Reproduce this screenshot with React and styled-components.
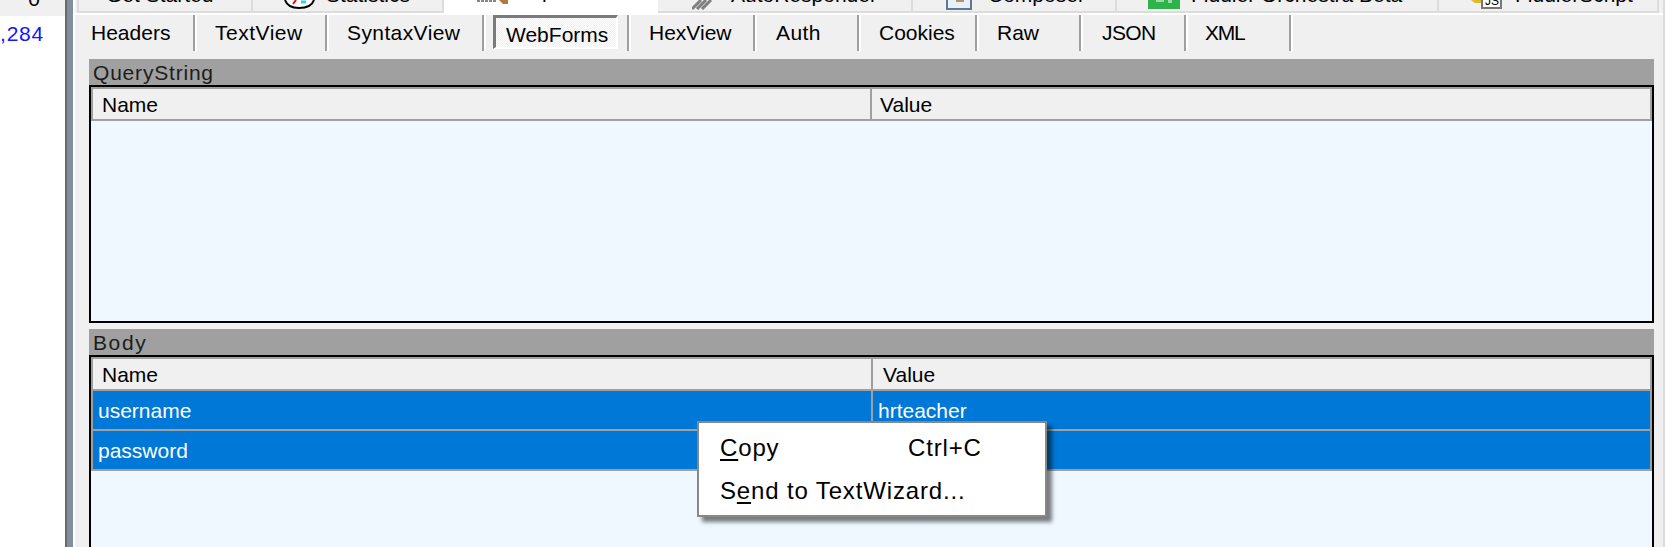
import React from 'react'
import styled, { createGlobalStyle } from 'styled-components'

const GlobalStyle = createGlobalStyle`
    html, body {
        margin: 0;
        height: 547px;
        overflow: hidden;
        background: #fff;
        font-family: "Liberation Sans", Arial, sans-serif;
        color: #000;
    }
    * { box-sizing: border-box; }
`

const Page = styled.div`
    display: flex;
    height: 547px;
    width: 1669px;
    overflow: hidden;
`
const SessionList = styled.div`
    width: 65px;
    flex: none;
    display: flex;
    flex-direction: column;
    font-size: 21px;
    line-height: 24px;
`
const ListHead = styled.div`
    height: 16px;
    background: #f0f0f0;
    display: flex;
    align-items: flex-end;
    justify-content: flex-end;
    padding: 0 25px 5px 0;
    overflow: hidden;
`
const ListCell = styled.div`
    color: #1414ff;
    text-align: right;
    padding-right: 22px;
    margin-top: 6px;
    letter-spacing: 0.8px;
    white-space: nowrap;
`
const Splitter = styled.div`
    width: 10px;
    flex: none;
    background: #7f8f9f;
    border-left: 2px solid #6a6a6a;
    border-right: 2px solid #fff;
`
const Panel = styled.div`
    width: 1588px;
    flex: none;
    background: #f0f0f0;
    display: flex;
    flex-direction: column;
`
const RightEdge = styled.div`
    width: 2px;
    flex: none;
    background: #dcdcdc;
`
const TopTabs = styled.div`
    height: 13px;
    flex: none;
    display: flex;
    padding-left: 2px;
    overflow: hidden;
    font-size: 21px;
    line-height: 24px;
`
const TopTab = styled.div`
    position: relative;
    width: ${p => p.$width}px;
    flex: none;
    display: flex;
    align-items: flex-end;
    padding-left: ${p => p.$pad}px;
    padding-bottom: ${p => (p.$active ? 10 : 4)}px;
    white-space: nowrap;
    background: ${p => (p.$active ? '#fff' : '#f0f0f0')};
    border-bottom: ${p => (p.$active ? '0' : '2px solid #dcdcdc')};
    border-right: ${p => (p.$active ? '0' : '2px solid #dcdcdc')};
    border-left: ${p => (p.$first ? '2px solid #dcdcdc' : '0')};
`
const TabGlyph = styled.svg`
    position: absolute;
    top: 0;
    left: ${p => p.$left}px;
`
const SubTabs = styled.div`
    height: 38px;
    flex: none;
    display: flex;
    padding-left: 6px;
    border-top: 2px solid #fff;
    font-size: 21px;
`
const SubTab = styled.div`
    width: ${p => p.$width - 2}px;
    flex: none;
    margin-right: 2px;
    display: flex;
    align-items: center;
    padding-left: ${p => p.$pad}px;
    letter-spacing: ${p => p.$spacing || 0}px;
    border-right: 2px solid #a0a0a0;
    box-shadow: 2px 0 0 #fff;
    background: #f0f0f0;
`
const PressedTab = styled.div`
    align-self: flex-start;
    width: 125px;
    height: 34px;
    margin-left: 7px;
    padding: 5px 0 0 10px;
    line-height: 24px;
    border-top: 3px solid #7a7a7a;
    border-left: 3px solid #7a7a7a;
    border-right: 2px solid #fff;
    border-bottom: 2px solid #fff;
    background-color: #fff;
    background-image: conic-gradient(#f0f0f0 25%, #fff 0 50%, #f0f0f0 0 75%, #fff 0);
    background-size: 2px 2px;
`
const Sections = styled.div`
    flex: 1;
    min-height: 0;
    display: flex;
    flex-direction: column;
    position: relative;
    overflow: hidden;
    padding: 8px 9px 0 14px;
`
const SectionTitle = styled.div`
    height: 26px;
    flex: none;
    background: #a0a0a0;
    color: #1c1c1c;
    padding: 1px 0 0 4px;
    font-size: 21px;
    line-height: 26px;
    letter-spacing: ${p => p.$spacing}px;
`
const ListBox = styled.div`
    flex: none;
    height: ${p => p.$height}px;
    margin-bottom: 6px;
    background: #eff7ff;
    border: 2px solid #000;
`
const Grid = styled.div`
    border: 2px solid #a0a0a0;
    border-bottom: 0;
    font-size: 21px;
`
const HeadRow = styled.div`
    height: 32px;
    display: flex;
    background: #f0f0f0;
    border-bottom: 2px solid #a0a0a0;
`
const DataRow = styled.div`
    height: 40px;
    display: flex;
    background: #0078d7;
    color: #fff;
    border-bottom: 2px solid #a0a0a0;
`
const NameCell = styled.div`
    width: ${p => p.$width}px;
    flex: none;
    display: flex;
    align-items: center;
    padding: 2px 0 0 ${p => p.$pad}px;
    border-right: 2px solid #a0a0a0;
`
const ValueCell = styled.div`
    flex: 1;
    display: flex;
    align-items: center;
    padding: 2px 0 0 ${p => p.$pad}px;
`
const ContextMenu = styled.div`
    position: absolute;
    left: 622px;
    top: 370px;
    width: 350px;
    height: 96px;
    padding: 3px 0;
    background: #fff;
    border: 2px solid #888;
    box-shadow: 5px 5px 4px rgba(0, 0, 0, 0.5);
    font-size: 24px;
    letter-spacing: 0.85px;
`
const MenuItem = styled.div`
    height: 43px;
    display: flex;
    align-items: center;
    padding-left: 21px;
    white-space: nowrap;
`
const MenuLabel = styled.span`
    width: 188px;
    flex: none;
    u { text-underline-offset: 3px; }
`

const subTabs = [
    { label: 'Headers', width: 116, pad: 10 },
    { label: 'TextView', width: 132, pad: 18, spacing: 0.5 },
    { label: 'SyntaxView', width: 157, pad: 18, spacing: 0.4 },
    { label: 'WebForms', width: 145, pressed: true },
    { label: 'HexView', width: 126, pad: 18 },
    { label: 'Auth', width: 104, pad: 19, spacing: 0.4 },
    { label: 'Cookies', width: 118, pad: 18 },
    { label: 'Raw', width: 104, pad: 18 },
    { label: 'JSON', width: 105, pad: 19, spacing: -0.6 },
    { label: 'XML', width: 105, pad: 17, spacing: -1.2 },
]

const GaugeIcon = () => (
    <TabGlyph $left={31} width="31" height="10" viewBox="0 0 31 10">
        <path d="M1 0 C3 6 9 8 15 8 C21 8 28 6 30 0" fill="#fff" stroke="#000" strokeWidth="2" />
        <path d="M12 0 L9 4" stroke="#d11" strokeWidth="2" />
        <path d="M17 2 h5" stroke="#2dd" strokeWidth="3" />
    </TabGlyph>
)
const InspectIcon = () => (
    <TabGlyph $left={33} width="32" height="6" viewBox="0 0 32 6">
        <path d="M0 1 h20" stroke="#888" strokeWidth="2" strokeDasharray="3 1" />
        <path d="M22 0 L26 4 L31 4 L31 0 Z" fill="#b8773a" />
    </TabGlyph>
)
const ResponderIcon = () => (
    <TabGlyph $left={34} width="20" height="10" viewBox="0 0 20 10">
        <path d="M0 9 L9 0 M5 9 L14 0 M10 9 L19 0" stroke="#808080" strokeWidth="3" />
    </TabGlyph>
)
const ComposerIcon = () => (
    <TabGlyph $left={33} width="26" height="10" viewBox="0 0 26 10">
        <rect x="1" y="-4" width="24" height="13" fill="#eaf0f8" stroke="#5b7a99" strokeWidth="2" />
        <path d="M10 1 h8" stroke="#b09468" strokeWidth="2" />
    </TabGlyph>
)
const OrchestraIcon = () => (
    <TabGlyph $left={31} width="32" height="9" viewBox="0 0 32 9">
        <rect width="32" height="9" fill="#2eb34b" />
        <path d="M8 0 h8 v2 h-8 Z M20 0 h4 v3 h-4 Z" fill="#9ad9a8" />
    </TabGlyph>
)
const ScriptIcon = () => (
    <TabGlyph $left={32} width="31" height="9" viewBox="0 0 31 9">
        <path d="M0 0 L4 3 L11 3 L11 0 Z" fill="#e0b92c" />
        <rect x="11" y="-4" width="19" height="12" fill="#fff" stroke="#777" strokeWidth="2" />
        <text x="14" y="5" fontSize="12" fontFamily="Liberation Sans" fill="#000">JS</text>
    </TabGlyph>
)

const App = () => (
    <Page>
        <GlobalStyle />
        <SessionList>
            <ListHead>0</ListHead>
            <ListCell>,284</ListCell>
        </SessionList>
        <Splitter />
        <Panel>
            <TopTabs>
                <TopTab $first $width={176} $pad={27}>Get Started</TopTab>
                <TopTab $width={191} $pad={73}><GaugeIcon />Statistics</TopTab>
                <TopTab $active $width={214} $pad={70}><InspectIcon />Inspectors</TopTab>
                <TopTab $width={255} $pad={73}><ResponderIcon />AutoResponder</TopTab>
                <TopTab $width={204} $pad={75}><ComposerIcon />Composer</TopTab>
                <TopTab $width={322} $pad={74}><OrchestraIcon />Fiddler Orchestra Beta</TopTab>
                <TopTab $width={220} $pad={76}><ScriptIcon />FiddlerScript</TopTab>
            </TopTabs>
            <SubTabs>
                {subTabs.map(tab => (
                    <SubTab key={tab.label} $width={tab.width} $pad={tab.pad || 0} $spacing={tab.spacing}>
                        {tab.pressed ? <PressedTab>{tab.label}</PressedTab> : tab.label}
                    </SubTab>
                ))}
            </SubTabs>
            <Sections>
                <SectionTitle $spacing={0.8}>QueryString</SectionTitle>
                <ListBox $height={238}>
                    <Grid>
                        <HeadRow>
                            <NameCell $width={779} $pad={9}>Name</NameCell>
                            <ValueCell $pad={8}>Value</ValueCell>
                        </HeadRow>
                    </Grid>
                </ListBox>
                <SectionTitle $spacing={1.6}>Body</SectionTitle>
                <ListBox $height={240}>
                    <Grid>
                        <HeadRow>
                            <NameCell $width={780} $pad={9}>Name</NameCell>
                            <ValueCell $pad={10}>Value</ValueCell>
                        </HeadRow>
                        <DataRow>
                            <NameCell $width={780} $pad={5}>username</NameCell>
                            <ValueCell $pad={5}>hrteacher</ValueCell>
                        </DataRow>
                        <DataRow>
                            <NameCell $width={780} $pad={5}>password</NameCell>
                            <ValueCell $pad={5} />
                        </DataRow>
                    </Grid>
                </ListBox>
                <ContextMenu>
                    <MenuItem>
                        <MenuLabel><u>C</u>opy</MenuLabel>
                        <span>Ctrl+C</span>
                    </MenuItem>
                    <MenuItem>
                        <MenuLabel>S<u>e</u>nd to TextWizard...</MenuLabel>
                    </MenuItem>
                </ContextMenu>
            </Sections>
        </Panel>
        <RightEdge />
    </Page>
)

export default App
